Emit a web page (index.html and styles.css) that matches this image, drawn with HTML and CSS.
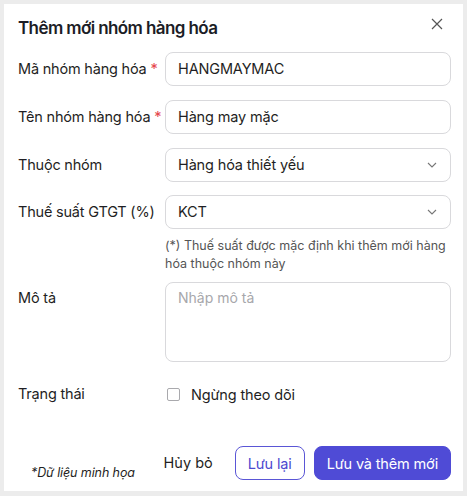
FILE: index.html
```html
<!DOCTYPE html>
<html lang="vi">
<head>
<meta charset="utf-8">
<link rel="stylesheet" href="styles.css">
</head>
<body>
<div class="card">
  <div class="header">
    <h1 class="title">Thêm mới nhóm hàng hóa</h1>
    <svg class="close" width="12" height="12" viewBox="0 0 12 12"><path d="M1 1L11 11M11 1L1 11" stroke="#555" stroke-width="1.2" fill="none"/></svg>
  </div>
  <div class="form">
    <div class="row">
      <label class="label">Mã nhóm hàng hóa <span class="req">*</span></label>
      <div class="field"><div class="input">HANGMAYMAC</div></div>
    </div>
    <div class="row">
      <label class="label">Tên nhóm hàng hóa <span class="req">*</span></label>
      <div class="field"><div class="input">Hàng may mặc</div></div>
    </div>
    <div class="row">
      <label class="label">Thuộc nhóm</label>
      <div class="field"><div class="input select"><span>Hàng hóa thiết yếu</span><svg class="chev" width="10" height="6" viewBox="0 0 10 6"><path d="M1 1L5 5L9 1" stroke="#777" stroke-width="1.1" fill="none"/></svg></div></div>
    </div>
    <div class="row row-tax">
      <label class="label">Thuế suất GTGT (%)</label>
      <div class="field">
        <div class="input select"><span>KCT</span><svg class="chev" width="10" height="6" viewBox="0 0 10 6"><path d="M1 1L5 5L9 1" stroke="#777" stroke-width="1.1" fill="none"/></svg></div>
        <p class="hint">(*) Thuế suất được mặc định khi thêm mới hàng hóa thuộc nhóm này</p>
      </div>
    </div>
    <div class="row row-top">
      <label class="label">Mô tả</label>
      <div class="field"><div class="textarea">Nhập mô tả</div></div>
    </div>
    <div class="row row-status">
      <label class="label">Trạng thái</label>
      <div class="field check"><span class="box"></span><span>Ngừng theo dõi</span></div>
    </div>
  </div>
  <div class="footer">
    <span class="note">*Dữ liệu minh họa</span>
    <div class="actions">
      <span class="cancel">Hủy bỏ</span>
      <button class="btn btn-outline">Lưu lại</button>
      <button class="btn btn-primary">Lưu và thêm mới</button>
    </div>
  </div>
</div>
</body>
</html>
```
FILE: styles.css
```css
* { box-sizing: border-box; }
html, body { margin: 0; padding: 0; }
body {
  background: #ececec;
  padding: 4px;
  font-family: Inter, "Noto Sans", sans-serif;
  color: #1f1f24;
  width: 467px;
  height: 496px;
}
.card {
  background: #fff;
  width: 459px;
  height: 487px;
  padding: 12px 12px 0 14px;
  display: flex;
  flex-direction: column;
}
.header {
  display: flex;
  justify-content: space-between;
  align-items: center;
  height: 24px;
}
.title {
  margin: 0;
  font-size: 17px;
  font-weight: 600;
  color: #1c1d26;
  letter-spacing: -0.6px;
}
.close { margin-right: 8px; margin-top: -8px; }
.form {
  margin-top: 12px;
  display: flex;
  flex-direction: column;
  gap: 14px;
}
.row {
  display: flex;
  align-items: flex-start;
}
.label {
  width: 147px;
  flex: none;
  font-size: 14.5px;
  letter-spacing: -0.2px;
  line-height: 34px;
  color: #1f1f24;
  white-space: nowrap;
}
.req { color: #e5484d; }
.field { flex: 1; }
.input {
  height: 34px;
  border: 1px solid #d9d9dc;
  border-radius: 8px;
  padding: 0 12px;
  font-size: 14.5px;
  letter-spacing: -0.15px;
  line-height: 32px;
  color: #1f1f24;
}
.select {
  display: flex;
  justify-content: space-between;
  align-items: center;
}
.chev { margin-right: 1px; }
.row-tax { margin-top: -1px; }
.hint {
  margin: 8px 0 0 0;
  font-size: 12.5px;
  line-height: 18px;
  color: #555;
  padding-right: 4px;
}
.row-top { margin-top: -5px; }
.row-top .label { line-height: 22px; padding-top: 5px; }
.textarea {
  height: 80px;
  border: 1px solid #d9d9dc;
  border-radius: 8px;
  padding: 6px 12px;
  font-size: 14px;
  color: #a7a7ab;
}
.row-status { margin-top: 7px; }
.row-status .label { line-height: 22px; }
.check {
  display: flex;
  align-items: center;
  height: 22px;
  font-size: 14.5px;
  letter-spacing: -0.15px;
  padding-left: 2px;
}
.box {
  width: 13px;
  height: 13px;
  border: 1px solid #a9a9ad;
  border-radius: 2px;
  margin-right: 11px;
}
.footer {
  margin-top: auto;
  margin-bottom: 11px;
  display: flex;
  align-items: center;
  justify-content: space-between;
  padding-left: 13px;
}
.note {
  font-style: italic;
  font-size: 12.5px;
  letter-spacing: -0.1px;
  color: #1f1f24;
  margin-top: 18px;
}
.actions {
  display: flex;
  align-items: center;
}
.cancel {
  font-size: 14.5px;
  margin-right: 22px;
  margin-top: -1px;
}
.btn {
  font-family: inherit;
  font-size: 14.5px;
  letter-spacing: -0.15px;
  height: 34px;
  border-radius: 8px;
  padding: 0 12px;
  cursor: pointer;
}
.btn-outline {
  background: #fff;
  border: 1px solid #5a56d6;
  color: #4d49cf;
  margin-right: 9px;
}
.btn-primary {
  background: #4f4bd6;
  border: 1px solid #4f4bd6;
  color: #fff;
}
```
